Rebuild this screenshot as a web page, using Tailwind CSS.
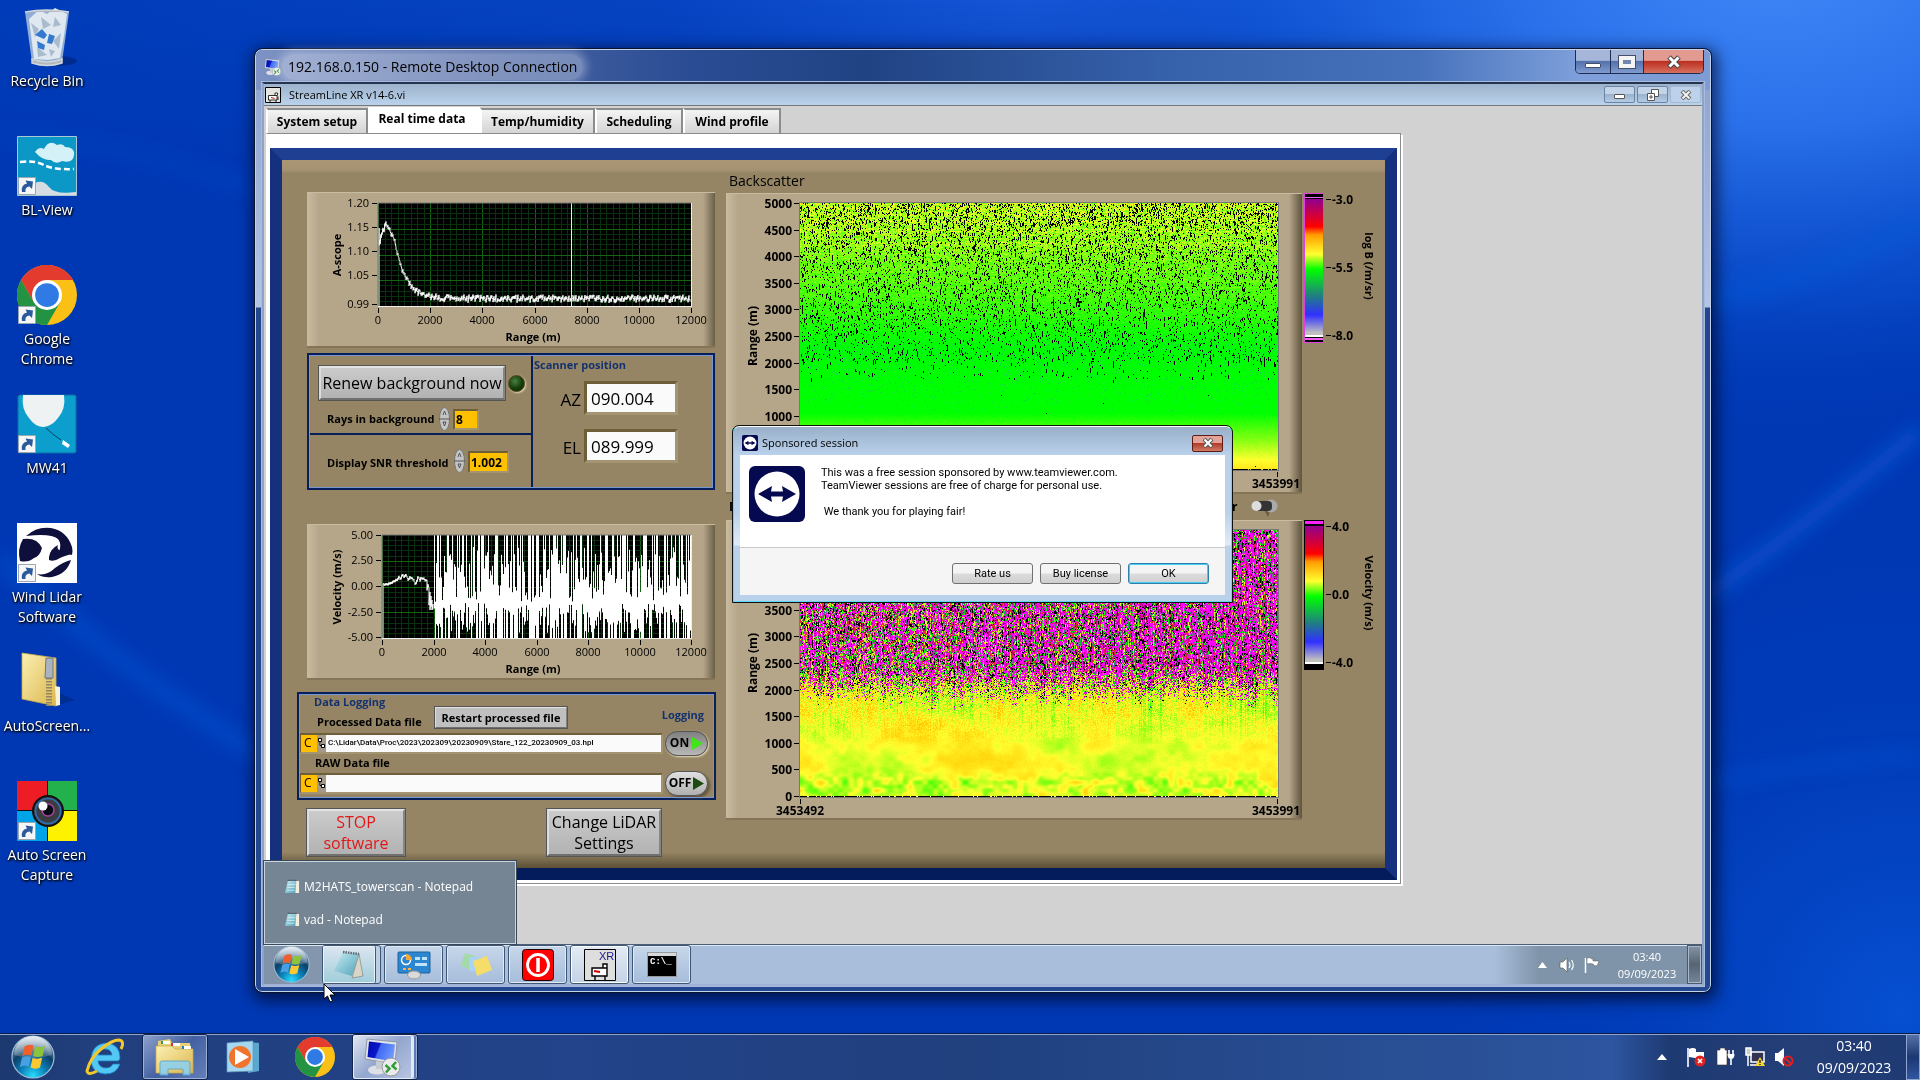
<!DOCTYPE html>
<html lang="en">

<head>
  <meta charset="UTF-8" />
  <meta name="viewport" content="width=device-width, initial-scale=1.0" />
  <title>Lidar desktop</title>
  <script src="https://cdn.jsdelivr.net/npm/@tailwindcss/browser@4"></script>
</head>

<body class="h-screen overflow-hidden flex flex-col relative bg-[#0038b4] font-['Open_Sans','Noto_Sans',sans-serif] text-black">

  <!-- wallpaper -->
  <svg class="absolute inset-0 w-full h-full" viewBox="0 0 1920 1080" preserveAspectRatio="none" aria-hidden="true">
    <defs>
      <radialGradient id="glow" cx="1780" cy="-60" r="760" gradientUnits="userSpaceOnUse" gradientTransform="scale(1 .62)">
        <stop offset="0" stop-color="#4088f8" />
        <stop offset=".35" stop-color="#2a70ea" />
        <stop offset=".7" stop-color="#0c50d0" stop-opacity=".7" />
        <stop offset="1" stop-color="#0038b4" stop-opacity="0" />
      </radialGradient>
      <linearGradient id="topband" x1="0" x2="1">
        <stop offset="0" stop-color="#003cb9" />
        <stop offset=".35" stop-color="#0644c2" />
        <stop offset=".6" stop-color="#1a5cdc" />
        <stop offset="1" stop-color="#2c74ee" />
      </linearGradient>
      <linearGradient id="fade" x1="0" y1="0" x2="0" y2="1">
        <stop offset="0" stop-color="#fff" />
        <stop offset="1" stop-color="#000" />
      </linearGradient>
      <radialGradient id="lowglow" cx="1900" cy="1010" r="480" gradientUnits="userSpaceOnUse">
        <stop offset="0" stop-color="#0650d2" />
        <stop offset="1" stop-color="#0038b4" stop-opacity="0" />
      </radialGradient>
      <mask id="topmask"><rect width="1920" height="160" fill="url(#fade)" /></mask>
      <filter id="soft"><feGaussianBlur stdDeviation="9" /></filter>
    </defs>
    <rect width="1920" height="1080" fill="#0038b4" />
    <rect width="1920" height="160" fill="url(#topband)" mask="url(#topmask)" />
    <rect width="1920" height="1080" fill="url(#glow)" />
    <rect width="1920" height="1080" fill="url(#lowglow)" />
    <g fill="none" stroke="#0a58d8" filter="url(#soft)">
      <path d="M0 135 Q120 140 260 190" stroke-width="7" opacity=".4" />
      <path d="M0 560 Q120 670 260 755" stroke-width="16" opacity=".5" />
      <path d="M1700 600 Q1800 530 1920 430" stroke-width="14" opacity=".7" />
      <path d="M1700 300 Q1820 280 1920 220" stroke-width="26" opacity=".4" />
      <path d="M1700 785 Q1800 762 1920 755" stroke-width="8" opacity=".5" />
    </g>
  </svg>

  <!-- shared artwork -->
  <svg class="absolute w-0 h-0" aria-hidden="true">
    <defs>
      <radialGradient id="orbfill" cx=".5" cy=".95" r=".9">
        <stop offset="0" stop-color="#27dcff" />
        <stop offset=".35" stop-color="#0a7fb6" />
        <stop offset=".65" stop-color="#0d3f68" />
        <stop offset="1" stop-color="#8fa9bf" />
      </radialGradient>
      <linearGradient id="orbtop" x1="0" y1="0" x2="0" y2="1">
        <stop offset="0" stop-color="#fff" stop-opacity=".75" />
        <stop offset="1" stop-color="#fff" stop-opacity=".15" />
      </linearGradient>
      <linearGradient id="screen" x1="0" y1="0" x2="1" y2=".3">
        <stop offset="0" stop-color="#0008b0" />
        <stop offset=".45" stop-color="#0a18c8" />
        <stop offset=".5" stop-color="#4068f0" />
        <stop offset="1" stop-color="#6b95ff" />
      </linearGradient>
      <linearGradient id="folder" x1="0" y1="0" x2="1" y2="1">
        <stop offset="0" stop-color="#fbf0b4" />
        <stop offset="1" stop-color="#dcb64c" />
      </linearGradient>
      <linearGradient id="pad" x1="0" y1="0" x2="1" y2="1">
        <stop offset="0" stop-color="#c9ecf3" />
        <stop offset="1" stop-color="#4fa3b8" />
      </linearGradient>
    </defs>
    <symbol id="orb" viewBox="0 0 44 44">
      <circle cx="22" cy="22" r="21" fill="url(#orbfill)" stroke="#9fc0d8" stroke-width="1.2" />
      <path d="M3 20a19 19 0 0 1 38 0q-19 6-38 0z" fill="url(#orbtop)" />
      <path d="M13.500 11.500q4-3 9-1l-2.200 10q-4.500-2-9 .6z" fill="#f0602c" />
      <path d="M24 11.500q5 2 10-.8l-2.300 10q-4.500 2.400-9.500.2z" fill="#8cc43c" />
      <path d="M11 22.600q4.500-2.600 9-.6l-2.200 9.600q-4.500-2-9 .6z" fill="#4a9fe0" />
      <path d="M21.600 22.800q5 2 9.600-.2l-2.200 9.800q-5 2.400-9.600.2z" fill="#fcc832" />
    </symbol>
    <symbol id="chrome" viewBox="0 0 48 48">
      <circle cx="24" cy="24" r="24" fill="#fbc016" />
      <path d="M24 12h20.800A24 24 0 0 0 3.200 12L13.600 30z" fill="#e33b2e" />
      <path d="M3.200 12A24 24 0 0 0 24 48L34.400 30 24 24 13.600 30z" fill="#229342" />
      <circle cx="24" cy="24" r="12" fill="#fff" />
      <circle cx="24" cy="24" r="9.500" fill="#2f7ae5" />
    </symbol>
    <symbol id="shortcut" viewBox="0 0 18 18">
      <path d="M.5.5h17v17H.5z" fill="#f4f6f8" stroke="#9aa6b0" />
      <path d="M4 15Q2.500 8 9 6.500L7.500 3.500 15 4.500 14 12 11.500 9.500Q6.500 10 7.500 15z" fill="#2a5a9c" />
    </symbol>
    <symbol id="rdp" viewBox="0 0 40 40">
      <path d="M4 2L34 5 32 27 2 22z" fill="#dfe3ea" stroke="#9097a5" />
      <path d="M6 4.500L32 7.500 30 24.500 4.500 20z" fill="url(#screen)" />
      <ellipse cx="14" cy="33" rx="9" ry="4.500" fill="#dde0e4" />
      <path d="M13 24l8 1v7h-8z" fill="#c8ccd2" />
      <circle cx="28" cy="30" r="9" fill="#e8eaec" stroke="#999" />
      <path d="M22.500 28l4 3.500-3.500 4M33.500 32.500l-4-3.500 3.500-4" fill="none" stroke="#2f9b35" stroke-width="2.400" />
    </symbol>
    <symbol id="notepad" viewBox="0 0 16 16">
      <path d="M3 2L12 2 11 15 0 15z" fill="url(#pad)" />
      <path d="M12 2l3 0v13h-4z" fill="#f2efe0" />
      <path d="M3 1.500h10" stroke="#354a55" stroke-width="1.500" stroke-dasharray="1 1" />
      <path d="M3 6h8M2.500 9h8M2 12h8" stroke="#fff" stroke-width=".6" />
    </symbol>
    <symbol id="tv" viewBox="0 0 56 56">
      <rect width="56" height="56" rx="6" fill="#050a50" />
      <circle cx="28" cy="28" r="22.500" fill="#fff" />
      <path d="M9 28L23 20 22 25.500H34L33 20 47 28 33 36 34 30.500H22L23 36z" fill="#050a50" />
    </symbol>
    <symbol id="vi" viewBox="0 0 32 32">
      <path d="M1 1h30v30H1z" fill="#e6e4e0" stroke="#000" stroke-width="2" />
      <path d="M7 17h17v9H7zM20 17v-5h5v5M10 26v4M22 26v4M26 19v7" fill="#fff" stroke="#000" stroke-width="1.600" />
      <path d="M12 21l7 2" stroke="#c00" stroke-width="2" />
    </symbol>
  </svg>

  <!-- desktop -->
  <main class="relative flex-1 min-h-0">
    <nav class="w-[94px] text-white text-[14px] leading-[20px] text-center [text-shadow:1px_1px_2px_#000,0_1px_3px_#000] select-none">
      <a href="#" class="h-[129px] pt-[7px] flex flex-col items-center gap-[4px]">
        <svg class="w-[60px] h-[60px] shrink-0" viewBox="0 0 60 60">
          <ellipse cx="40" cy="54" rx="20" ry="5" fill="#00267c" opacity=".7" />
          <path d="M8 5h44l-7 50q-15 6-30 0z" fill="#a9c2dd" opacity=".85" />
          <path d="M12 12l10-9 8 4 8-6 12 6-3 22-4 22-12 2-14-1z" fill="#dfe8f0" />
          <path d="M14 16l8 6-4 8zM24 10l10 8-8 4zM36 34l8-8-2 16zM20 40l10 8-9 2zM38 10l6 8-8 2zM32 42l6 2-4 6z" fill="#a9bccd" />
          <path d="M18 28l7-6 5 6-3 4zM32 27l6 2-3 8-5-1zM20 34l8 4-1 5-6-2z" fill="#3478d0" />
          <path d="M8 5q22-4 44 0M15 52q15 6 30 0v4q-15 5-30 0z" fill="#b4b8bc" stroke="#cfd5da" stroke-width="1.500" />
        </svg>
        <span>Recycle Bin</span>
      </a>
      <a href="#" class="h-[129px] pt-[7px] flex flex-col items-center gap-[4px]">
        <svg class="w-[60px] h-[60px] shrink-0" viewBox="0 0 60 60">
          <path d="M.5.500h59v59H.5z" fill="#0b98c6" stroke="#a9c8d4" />
          <path d="M18 16q4-6 9-3 5-10 13-4 6-2 8 2 10 0 9 8-1 9-12 6-6 4-11-1-8 1-16-8z" fill="#d4f1f7" />
          <path d="M3 26q14-2 24 3t30 4" fill="none" stroke="#fff" stroke-width="2.500" stroke-dasharray="6 3" />
          <path d="M18 47q8-4 14 4t27 5v3H18z" fill="#d5dde2" />
          <use href="#shortcut" x="1" y="41" width="18" height="18" />
        </svg>
        <span>BL-View</span>
      </a>
      <a href="#" class="h-[129px] pt-[7px] flex flex-col items-center gap-[4px]">
        <svg class="w-[60px] h-[60px] shrink-0" viewBox="0 0 60 60">
          <use href="#chrome" width="60" height="60" />
          <use href="#shortcut" x="1" y="41" width="18" height="18" />
        </svg>
        <span>Google<br />Chrome</span>
      </a>
      <a href="#" class="h-[129px] pt-[7px] flex flex-col items-center gap-[4px]">
        <svg class="w-[60px] h-[60px] shrink-0" viewBox="0 0 60 60">
          <rect x="1" y="1" width="58" height="58" rx="2" fill="#0c9fce" stroke="#0a6fa0" />
          <path d="M6 1h41q2 14-6 23-6 8-14 9-9 0-15-9Q4 15 6 1z" fill="#eef2f3" />
          <path d="M29 34q6 6 15 12" fill="none" stroke="#045" />
          <path d="M46 46l7 5-2 3-6-4z" fill="#fff" />
          <use href="#shortcut" x="1" y="41" width="18" height="18" />
        </svg>
        <span>MW41</span>
      </a>
      <a href="#" class="h-[129px] pt-[7px] flex flex-col items-center gap-[4px]">
        <svg class="w-[60px] h-[60px] shrink-0" viewBox="0 0 60 60">
          <path d="M0 0h60v60H0z" fill="#fff" />
          <path d="M9 13Q20 3 34 5 50 8 55 24q1 4 0 8-7-3-13-3 3-8-1-13Q34 10 9 13z" fill="#0f0f3c" />
          <path d="M6 16q14-2 19 9-2 8-8 10-6 5-14 3-3-12 3-22z" fill="#0f0f3c" />
          <path d="M32 34q1-8 9-12-2 4 3 6 5 1 11 3-8 2-12 4-6 4-11 2zM20 51q10 2 18-6 8-6 16-8-4 14-19 17-9 1-15-3z" fill="#0f0f3c" />
          <use href="#shortcut" x="1" y="41" width="18" height="18" />
        </svg>
        <span>Wind Lidar<br />Software</span>
      </a>
      <a href="#" class="h-[129px] pt-[7px] flex flex-col items-center gap-[4px]">
        <svg class="w-[60px] h-[60px] shrink-0" viewBox="0 0 60 60">
          <path d="M38 54l20-6-18-8z" fill="#00267c" opacity=".6" />
          <path d="M5 1l34 5v48L5 47z" fill="url(#folder)" stroke="#c9a94a" stroke-width=".8" />
          <path d="M38 34l5 1v18l-4 1z" fill="#f6f3dc" />
          <path d="M32 26v28" stroke="#8f8668" stroke-width="6" stroke-dasharray="1.500 1.500" />
          <path d="M29 6h7v20h-8z" fill="#a9b4c0" stroke="#6c7680" />
        </svg>
        <span>AutoScreen...</span>
      </a>
      <a href="#" class="h-[129px] pt-[7px] flex flex-col items-center gap-[4px]">
        <svg class="w-[60px] h-[60px] shrink-0" viewBox="0 0 60 60">
          <path d="M0 0h30v30H0z" fill="#ee1c24" />
          <path d="M30 0h30v30H30z" fill="#22b14c" />
          <path d="M0 30h30v30H0z" fill="#00a2e8" />
          <path d="M30 30h30v30H30z" fill="#fff200" />
          <path d="M30.500 0v60M0 29.500h60" stroke="#111" />
          <circle cx="31" cy="30" r="15" fill="#3c3c40" stroke="#111" stroke-width="2" />
          <circle cx="31" cy="30" r="12.500" fill="none" stroke="#2b70b8" stroke-width="1.600" />
          <circle cx="31" cy="29" r="6" fill="#0a0a14" stroke="#a0459c" stroke-width="1.500" />
          <circle cx="26" cy="25" r="4.500" fill="#fff" />
          <use href="#shortcut" x="1" y="41" width="18" height="18" />
        </svg>
        <span>Auto Screen<br />Capture</span>
      </a>
    </nav>

    <!-- remote desktop window -->
    <section class="absolute top-[49px] left-[255px] right-[209px] bottom-[41px] rounded-[7px] border border-[#c3d3ee] outline outline-[#0a1430] px-[6px] pb-[5px] flex flex-col shadow-[2px_4px_16px_4px_rgba(0,0,20,0.65)] bg-[linear-gradient(180deg,#8ca0cc_0px,#b4c4e4_257px,#23468e_258px,#24488f_100%)]">
      <div class="absolute inset-x-0 top-0 h-[40px] rounded-t-[6px] bg-[linear-gradient(90deg,#7e93c4_0%,#5069a6_14%,#2a4c94_30%,#204384_42%,#3560aa_62%,#4672bc_80%,#7e9fda_91%,#7d9bd4_100%)]"></div>
      <header class="relative h-[32px] flex items-start">
        <svg class="w-[18px] h-[20px] mt-[7px] ml-[2px]"><use href="#rdp" width="18" height="20" /></svg>
        <h1 class="mt-[4px] px-[6px] rounded-full text-[14px] leading-[26px] whitespace-nowrap bg-white/30 shadow-[0_0_8px_4px_rgba(255,255,255,0.3)]">192.168.0.150 - Remote Desktop Connection</h1>
        <div class="ml-auto h-[24px] flex border border-t-0 border-[#1d2c50] rounded-b-[5px] overflow-hidden">
          <button aria-label="Minimize" class="w-[35px] grid place-items-center pt-[8px] border-r border-[#1d2c50] bg-[linear-gradient(180deg,#a5b6d8_45%,#5571ae_50%,#7f9bd0)]"><span class="w-[16px] h-[5px] bg-white border border-[#454f6a] rounded-[1px]"></span></button>
          <button aria-label="Maximize" class="w-[33px] grid place-items-center border-r border-[#1d2c50] bg-[linear-gradient(180deg,#a5b6d8_45%,#5571ae_50%,#7f9bd0)]"><span class="w-[16px] h-[12px] border-4 border-[#f4f4f4] outline outline-[#454f6a] bg-[#7085b0]"></span></button>
          <button aria-label="Close" class="w-[59px] grid place-items-center bg-[linear-gradient(180deg,#e39a90_45%,#bb3020_50%,#d8705f)]">
            <svg width="16" height="14" viewBox="0 0 16 14"><path d="M3 2l10 10M13 2L3 12" stroke="#454545" stroke-width="5" /><path d="M3.500 2.500l9 9M12.500 2.500l-9 9" stroke="#fff" stroke-width="3" /></svg>
          </button>
        </div>
      </header>

      <div class="relative flex-1 min-h-0 flex flex-col border-2 border-[#24344e] border-b-[#9fb2d6] border-x-[#8fa2c8] outline outline-[#a9bbdc] bg-[#d2d2d2]">
        <!-- LabVIEW window title -->
        <div class="h-[22px] shrink-0 pl-[1px] pr-[1px] flex items-center bg-[linear-gradient(180deg,#9db2cb,#bad2ec)] border-b border-[#777]">
          <svg class="w-[16px] h-[16px]"><use href="#vi" width="16" height="16" /></svg>
          <h2 class="ml-[8px] text-[11px] leading-[20px]">StreamLine XR v14-6.vi</h2>
          <div class="ml-auto flex gap-[2px] h-[17px]">
            <button aria-label="Minimize" class="w-[31px] grid place-items-center border border-[#6b84a3] rounded-[2px] bg-[linear-gradient(180deg,#c3d4e8_45%,#9bb3cf_50%,#b5cbe4)]"><span class="mt-[3px] w-[11px] h-[5px] bg-white border border-[#555] rounded-[1px]"></span></button>
            <button aria-label="Restore" class="w-[31px] grid place-items-center border border-[#6b84a3] rounded-[2px] bg-[linear-gradient(180deg,#c3d4e8_45%,#9bb3cf_50%,#b5cbe4)]">
              <svg width="12" height="12" viewBox="0 0 12 12" fill="#fff" stroke="#555"><path d="M4.500.5h7v7h-7z" /><path d="M.5 4.500h7v7h-7zM3 7h2v2H3z" /></svg>
            </button>
            <button aria-label="Close" class="w-[31px] grid place-items-center border border-[#a3bad4] rounded-[2px] bg-[#bdd2ea]">
              <svg width="12" height="10" viewBox="0 0 12 10"><path d="M2 1l8 8M10 1L2 9" stroke="#666" stroke-width="4" /><path d="M2.500 1.500l7 7M9.500 1.500l-7 7" stroke="#f4f4f4" stroke-width="2" /></svg>
            </button>
          </div>
        </div>

        <!-- front panel -->
        <div class="flex-1 min-h-0 overflow-hidden pt-[1px] pl-[2px]">
          <div role="tablist" class="flex items-end h-[26px] text-[12px] font-bold leading-[20px]">
            <button role="tab" class="w-[102px] h-[25px] border-2 border-b-0 border-[#8c8c8c] border-l-white bg-[linear-gradient(180deg,#f4f4f4,#d4d4d4)]">System setup</button>
            <button role="tab" aria-selected="true" class="w-[112px] h-[26px] pb-[2px] pr-[4px] bg-white">Real time data</button>
            <button role="tab" class="w-[115px] h-[25px] border-2 border-b-0 border-[#8c8c8c] border-l-white bg-[linear-gradient(180deg,#f4f4f4,#d4d4d4)]">Temp/humidity</button>
            <button role="tab" class="w-[88px] h-[25px] border-2 border-b-0 border-[#8c8c8c] border-l-white bg-[linear-gradient(180deg,#f4f4f4,#d4d4d4)]">Scheduling</button>
            <button role="tab" class="w-[98px] h-[25px] border-2 border-b-0 border-[#8c8c8c] border-l-white bg-[linear-gradient(180deg,#f4f4f4,#d4d4d4)]">Wind profile</button>
          </div>
          <div class="w-[1135px] pt-[14px] px-[3px] pb-[3px] bg-white border border-[#8c8c8c] border-l-white shadow-[2px_2px_0_#fff]">
            <div class="border-[12px] border-t-[#1f3f92] border-x-[#15307f] border-b-[#051c5c] bg-[#958564] h-[732px]">
              <div class="flex h-full pl-[15px] bg-[linear-gradient(180deg,#ab9674_0px,#a59272_10px,#958564_13px,#958564_692px,#5f5238_707px)]">

                <div class="w-[419px] pt-[32px]">
                  <figure class="ml-[10px] w-[408px] h-[156px] bg-[linear-gradient(90deg,#c9bb9f_0px,#b5a68a_12px,#b5a68a_396px,#6a5f48_408px)] border-t border-[#c9bb9f] border-b-2 border-b-[#857556]">
                    <svg id="ascope" class="w-full h-full overflow-visible" role="img" aria-label="A-scope graph"></svg>
                  </figure>

                  <div class="ml-[10px] mt-[5px] w-[408px] h-[137px] flex border-2 border-[#07205c] outline outline-[#7b95cf] -outline-offset-3">
                    <div class="w-[224px] border-r-2 border-[#07205c] flex flex-col">
                      <div class="h-[80px] border-b-2 border-[#07205c] pt-[10px] pl-[9px]">
                        <div class="flex items-center">
                          <button class="w-[188px] h-[36px] text-[16px] leading-[20px] whitespace-nowrap border-3 border-t-[#e4e4e4] border-l-[#dcdcdc] border-r-[#858585] border-b-[#707070] outline outline-[#555] -outline-offset-1 bg-[linear-gradient(180deg,#cbcbcb,#b2b2b2)]">Renew background now</button>
                          <span class="ml-[2px] w-[17px] h-[17px] rounded-full border border-[#52461e] bg-[radial-gradient(circle_at_40%_35%,#4a8040,#123c08_55%,#0a2804)] shadow-[1px_1px_2px_#e8dcc0]"></span>
                        </div>
                        <div class="mt-[6px] flex items-center gap-[3px] text-[12px] leading-[16px] font-bold">
                          <label for="rays" class="w-[109px] ml-[9px] text-[11px] whitespace-nowrap">Rays in background</label>
                          <svg width="11" height="24" viewBox="0 0 11 24"><ellipse cx="5.500" cy="12" rx="5" ry="11.500" fill="#c4c4c4" stroke="#777" /><path d="M0 12h11M4 8l1.500-4L7 8M4 15l1.500 4L7 15z" fill="none" stroke="#555" /></svg>
                          <input id="rays" value="8" class="w-[26px] h-[21px] pl-[1px] bg-[#ffc000] border-2 border-[#6f5f38] border-b-[#a39472] border-r-[#a39472]" />
                        </div>
                      </div>
                      <div class="flex-1 flex items-start pt-[14px] gap-[3px] text-[12px] leading-[16px] font-bold">
                        <label for="snr" class="w-[124px] ml-[18px] mt-[6px] text-[11px] whitespace-nowrap">Display SNR threshold</label>
                        <svg width="11" height="24" viewBox="0 0 11 24"><ellipse cx="5.500" cy="12" rx="5" ry="11.500" fill="#c4c4c4" stroke="#777" /><path d="M0 12h11M4 8l1.500-4L7 8M4 15l1.500 4L7 15z" fill="none" stroke="#555" /></svg>
                        <input id="snr" value="1.002" class="w-[41px] h-[22px] mt-[2px] pl-[1px] bg-[#ffc000] border-2 border-[#6f5f38] border-b-[#a39472] border-r-[#a39472]" />
                      </div>
                    </div>
                    <div class="flex-1 text-[17px] leading-[24px]">
                      <h3 class="pl-[1px] text-[11px] leading-[20px] font-bold text-[#14326f]">Scanner position</h3>
                      <div class="flex items-center mt-[6px]">
                        <label for="az" class="w-[48px] text-right mr-[3px] pt-[3px]">AZ</label>
                        <input id="az" value="090.004" class="w-[94px] h-[34px] pl-[4px] bg-[#fafafa] border-3 border-[#6f5f38] border-b-[#a39472] border-r-[#a39472]" />
                      </div>
                      <div class="flex items-center mt-[14px]">
                        <label for="el" class="w-[48px] text-right mr-[3px] pt-[3px]">EL</label>
                        <input id="el" value="089.999" class="w-[94px] h-[34px] pl-[4px] bg-[#fafafa] border-3 border-[#6f5f38] border-b-[#a39472] border-r-[#a39472]" />
                      </div>
                    </div>
                  </div>

                  <figure class="ml-[10px] mt-[34px] w-[408px] h-[156px] bg-[linear-gradient(90deg,#c9bb9f_0px,#b5a68a_12px,#b5a68a_396px,#6a5f48_408px)] border-t border-[#c9bb9f] border-b-2 border-b-[#857556]">
                    <svg id="velocity" class="w-full h-full overflow-visible" role="img" aria-label="Velocity graph"></svg>
                  </figure>

                  <div class="mt-[12px] h-[108px] border-2 border-[#07205c] outline outline-[#7b95cf] -outline-offset-3 text-[11px] font-bold leading-[16px]">
                    <div class="flex h-[37px]">
                      <div class="w-[135px] pl-[15px]">
                        <h3 class="text-[#14326f]">Data Logging</h3>
                        <label for="proc" class="block pl-[3px] mt-[4px] whitespace-nowrap">Processed Data file</label>
                      </div>
                      <button class="mt-[12px] w-[134px] h-[23px] whitespace-nowrap border-2 border-t-[#e4e4e4] border-l-[#dcdcdc] border-r-[#858585] border-b-[#707070] outline outline-[#555] -outline-offset-1 bg-[#c0c0c0]">Restart processed file</button>
                      <h3 class="ml-auto mr-[10px] mt-[13px] text-[#14326f]">Logging</h3>
                    </div>
                    <div class="flex items-center h-[24px] text-[12px]">
                      <div class="flex w-[364px] h-[21px] border-2 border-[#6f5f38] border-b-[#a39472] border-r-[#a39472]">
                        <span class="w-[16px] pl-[3px] bg-[#ffc000] font-normal">C</span>
                        <svg width="9" height="17" viewBox="0 0 9 17" class="bg-[#a39a8a]"><path d="M1.500 3.500h3v3h-3zM4.500 9.500h3v3h-3zM3 6.500v4h1.500" fill="#fff" stroke="#000" /></svg>
                        <input id="proc" value="C:\Lidar\Data\Proc\2023\202309\20230909\Stare_122_20230909_03.hpl" class="flex-1 min-w-0 pl-[2px] bg-[#fafafa] text-[8px] leading-[16px] font-medium font-['Roboto']" />
                      </div>
                      <button class="ml-[2px] w-[43px] h-[25px] flex items-center justify-center gap-[2px] rounded-full border border-[#555] bg-[linear-gradient(180deg,#808080,#b8b8b8)] shadow-[1px_1px_2px_#e8dcc0]">ON<svg width="12" height="13"><path d="M1 0l11 6.500-11 6.500z" fill="#3fe516" /></svg></button>
                    </div>
                    <label for="raw" class="block pl-[16px] h-[16px]">RAW Data file</label>
                    <div class="flex items-center h-[24px] text-[12px]">
                      <div class="flex w-[364px] h-[21px] border-2 border-[#6f5f38] border-b-[#a39472] border-r-[#a39472]">
                        <span class="w-[16px] pl-[3px] bg-[#ffc000] font-normal">C</span>
                        <svg width="9" height="17" viewBox="0 0 9 17" class="bg-[#a39a8a]"><path d="M1.500 3.500h3v3h-3zM4.500 9.500h3v3h-3zM3 6.500v4h1.500" fill="#fff" stroke="#000" /></svg>
                        <input id="raw" value="" class="flex-1 min-w-0 bg-[#fafafa]" />
                      </div>
                      <button class="ml-[2px] w-[43px] h-[25px] flex items-center justify-center gap-[2px] rounded-full border border-[#555] bg-[linear-gradient(180deg,#e0e0e0,#b0b0b0)] shadow-[2px_2px_3px_#5f5238]">OFF<svg width="11" height="13"><path d="M0 0l11 6.500-11 6.500z" fill="#1c4a10" /></svg></button>
                    </div>
                  </div>

                  <div class="mt-[8px] flex items-start text-[16px] leading-[21px]">
                    <button class="ml-[9px] w-[100px] h-[49px] pt-[1px] text-[#e01818] border-3 border-t-[#e4e4e4] border-l-[#dcdcdc] border-r-[#858585] border-b-[#707070] outline outline-[#555] -outline-offset-1 bg-[linear-gradient(180deg,#cbcbcb,#b2b2b2)]">STOP<br />software</button>
                    <button class="ml-[140px] w-[116px] h-[49px] pt-[1px] whitespace-nowrap border-3 border-t-[#e4e4e4] border-l-[#dcdcdc] border-r-[#858585] border-b-[#707070] outline outline-[#555] -outline-offset-1 bg-[linear-gradient(180deg,#cbcbcb,#b2b2b2)]">Change LiDAR<br />Settings</button>
                  </div>
                </div>

                <div class="ml-[10px] w-[650px]">
                  <h3 class="pt-[10px] pl-[3px] h-[33px] text-[14px] leading-[22px]">Backscatter</h3>
                  <div class="flex items-start">
                    <figure class="relative w-[576px] h-[301px] pl-[74px] pt-[9px] bg-[linear-gradient(90deg,#c9bb9f_0px,#b5a68a_12px,#b5a68a_563px,#5f543e_576px)] border-t border-[#c9bb9f] border-b-2 border-b-[#857556]">
                      <canvas id="backscatter" width="478" height="267" class="outline outline-[#777]"></canvas>
                      <svg class="axis absolute inset-0 w-full h-full overflow-visible"></svg>
                    </figure>
                    <svg class="bar ml-[2px] w-[72px] h-[152px] overflow-visible" data-ticks="-3.0,-5.5,-8.0" data-title="log B (/m/sr)" data-edge="#e040e0"></svg>
                  </div>
                  <div class="h-[26px] flex items-center text-[12px] font-bold">
                    <span class="w-[8px] ml-[3px] overflow-hidden">D</span>
                    <span class="ml-[495px]">r</span>
                    <svg class="ml-[14px]" width="27" height="22" viewBox="0 0 27 22"><path d="M12 12h8l-3 9z" fill="#6c5e42" /><circle cx="20" cy="10" r="6.500" fill="#aaa" /><rect x="4" y="5" width="17" height="10" rx="4" fill="#333" /><circle cx="5.500" cy="10" r="5" fill="#ddd" /></svg>
                  </div>
                  <div class="flex items-start">
                    <figure class="relative w-[576px] h-[300px] pl-[74px] pt-[9px] bg-[linear-gradient(90deg,#c9bb9f_0px,#b5a68a_12px,#b5a68a_563px,#5f543e_576px)] border-t border-[#c9bb9f] border-b-2 border-b-[#857556]">
                      <canvas id="doppler" width="478" height="267" class="outline outline-[#777]"></canvas>
                      <svg class="axis absolute inset-0 w-full h-full overflow-visible"></svg>
                    </figure>
                    <svg class="bar ml-[2px] w-[72px] h-[152px] overflow-visible" data-ticks="4.0,0.0,-4.0" data-title="Velocity (m/s)" data-edge="#000"></svg>
                  </div>
                </div>

              </div>
            </div>
          </div>
        </div>

        <!-- remote taskbar -->
        <footer class="h-[40px] shrink-0 border-t border-[#4d5f78] flex items-center gap-[3px] shadow-[inset_0_1px_0_#dbe6f2] bg-[linear-gradient(90deg,#7f92a8_0px,#8597ae_58px,#a9bedb_110px,#a9bedb_1230px,#8094a9_1275px,#8094a9_100%)]">
          <button aria-label="Start" class="w-[55px] grid place-items-center"><svg width="37" height="37"><use href="#orb" width="37" height="37" /></svg></button>
          <div class="flex w-[59px] h-[39px] rounded-[3px] border border-[#3f5674] bg-[#b8cfe6]">
            <button aria-label="Notepad" class="w-[53px] grid place-items-center rounded-[2px] border-r border-[#3f5674] shadow-[inset_0_0_0_1px_#eaf3fa] bg-[linear-gradient(180deg,#dbe6f1,#a0cdd9)]">
              <svg width="32" height="30" viewBox="0 0 32 30"><path d="M10 2l16 2-7 22-18-5z" fill="url(#pad)" /><path d="M26 4l4 22-11 2z" fill="#d9d6c8" stroke="#777" stroke-width=".6" /><path d="M10 2l16 2" stroke="#667" stroke-width="2.500" stroke-dasharray="1.500 1" /></svg>
            </button>
          </div>
          <button aria-label="Control Panel" class="w-[59px] h-[39px] grid place-items-center rounded-[3px] border border-[#3f5674] shadow-[inset_0_0_0_1px_#dfeaf5] bg-[linear-gradient(180deg,#c7d7ea,#a5bcda)]">
            <svg width="34" height="30" viewBox="0 0 34 30"><rect x="1" y="2" width="32" height="21" rx="1" fill="#2c86d0" stroke="#1d609c" /><circle cx="9" cy="10" r="4.500" fill="none" stroke="#fff" stroke-width="1.500" /><path d="M9 10V4a6 6 0 0 1 6 6z" fill="#f5a83c" /><path d="M18 7h5v3h-5zM25 7h5v3h-5zM18 13h12v3H18z" fill="#bfe3fa" /><path d="M6 19h3M11 19h3" stroke="#ffb24c" stroke-width="2" /><ellipse cx="17" cy="25" rx="6.500" ry="4" fill="#dadada" stroke="#999" /></svg>
          </button>
          <button aria-label="Sticky Notes" class="w-[59px] h-[39px] grid place-items-center rounded-[3px] border border-[#3f5674] shadow-[inset_0_0_0_1px_#dfeaf5] bg-[linear-gradient(180deg,#c7d7ea,#a5bcda)]">
            <svg width="32" height="28" viewBox="0 0 32 28"><path d="M5 2l12 4-4 14-12-5z" fill="#a4d9a8" /><path d="M9 6h14v14H9z" fill="#a9d3f4" /><path d="M13 10l14-5 5 14-15 6z" fill="#f6dc68" /></svg>
          </button>
          <button aria-label="Power" class="w-[59px] h-[39px] grid place-items-center rounded-[3px] border border-[#3f5674] shadow-[inset_0_0_0_1px_#dfeaf5] bg-[linear-gradient(180deg,#c7d7ea,#a5bcda)]">
            <svg width="32" height="32" viewBox="0 0 32 32"><rect x=".5" y=".5" width="31" height="31" rx="3" fill="#f00" stroke="#200" /><circle cx="16" cy="16" r="10.500" fill="none" stroke="#fff" stroke-width="2.800" /><path d="M16 9v14" stroke="#fff" stroke-width="3.500" /></svg>
          </button>
          <button aria-label="StreamLine XR" class="w-[59px] h-[39px] grid place-items-center rounded-[3px] border border-[#3f5674] shadow-[inset_0_0_0_1px_#fff] bg-[linear-gradient(180deg,#e3ebf4,#c3d2e5)]">
            <svg width="32" height="32" viewBox="0 0 32 32"><path d="M.5.5h31v31H.5z" fill="#dedede" stroke="#000" /><path d="M8 19h15v8H8zM19 19v-4h4v4M11 27v4M21 27v4" fill="#fff" stroke="#000" stroke-width="1.400" /><path d="M10 22l6 1" stroke="#c00" stroke-width="2" /><text x="15" y="11" font-size="11" fill="#1a1a8c" font-family="Liberation Sans">XR</text></svg>
          </button>
          <button aria-label="Command Prompt" class="w-[59px] h-[39px] grid place-items-center rounded-[3px] border border-[#3f5674] shadow-[inset_0_0_0_1px_#dfeaf5] bg-[linear-gradient(180deg,#c7d7ea,#a5bcda)]">
            <svg width="30" height="25" viewBox="0 0 30 25"><path d="M.5.5h29v24H.5z" fill="#000" stroke="#999" /><path d="M1 1h28v3H1z" fill="#d5d9dd" /><text x="3" y="12" font-size="9" font-weight="bold" fill="#fff" font-family="Liberation Mono">C:\_</text></svg>
          </button>
          <div class="ml-auto h-full flex items-center text-white">
            <svg width="9" height="6" class="mr-[12px]"><path d="M4.500 0L9 6H0z" fill="#fff" /></svg>
            <svg width="16" height="16" viewBox="0 0 16 16" class="mr-[9px]"><path d="M1 5h3l4-4v14l-4-4H1z" fill="#fff" stroke="#555" stroke-width=".6" /><path d="M10 5q2 3 0 6M12.500 3q3.500 5 0 10" fill="none" stroke="#fff" stroke-width="1.200" /></svg>
            <svg width="16" height="16" viewBox="0 0 16 16" class="mr-[16px]"><path d="M1.500 1v15" stroke="#fff" stroke-width="1.500" /><path d="M3 1q3-1 5 1h1v2h6l-2 5q-3 0-4-2-3-1-6 0z" fill="#fff" stroke="#555" stroke-width=".5" /></svg>
            <time class="w-[62px] text-center text-[11px] leading-[17px]">03:40<br />09/09/2023</time>
            <button aria-label="Show desktop" class="ml-[9px] w-[15px] h-full border border-[#4a5a6c] shadow-[inset_0_0_0_1px_#a9b8c8] bg-[linear-gradient(180deg,#8494a5,#566473_50%,#76869a)]"></button>
          </div>
        </footer>

        <!-- Notepad jump list -->
        <ul class="absolute left-0 bottom-[40px] w-[252px] h-[83px] bg-[#768593] border border-[#c8d4e0] outline outline-[#39495a] pl-[20px] text-white text-[12px] leading-[33px] pt-[8px]">
          <li><a href="#" class="flex items-center gap-[4px]"><svg width="15" height="15"><use href="#notepad" width="15" height="15" /></svg>M2HATS_towerscan - Notepad</a></li>
          <li><a href="#" class="flex items-center gap-[4px]"><svg width="15" height="15"><use href="#notepad" width="15" height="15" /></svg>vad - Notepad</a></li>
        </ul>
      </div>
    </section>

    <!-- TeamViewer dialog -->
    <section role="dialog" aria-labelledby="tv-title" class="absolute left-[733px] top-[426px] w-[499px] h-[176px] rounded-t-[6px] border border-t-white border-[#5fd8f4] outline outline-[#111] px-[6px] pb-[6px] flex flex-col text-[11px] leading-[13px] font-['Roboto','Open_Sans',sans-serif] bg-[linear-gradient(180deg,#9ab0ca_0px,#b9d1ea_28px,#b9d1ea_85px,#e0ecf8_118px,#b9d1ea_119px)]">
      <header class="h-[28px] flex items-center pt-[4px] px-[2px]">
        <svg width="16" height="16"><use href="#tv" width="16" height="16" /></svg>
        <h2 id="tv-title" class="ml-[4px] leading-[16px] font-['Open_Sans']">Sponsored session</h2>
        <button aria-label="Close" class="ml-auto w-[31px] h-[17px] grid place-items-center rounded-[2px] border border-[#5c1c14] bg-[linear-gradient(180deg,#e2a398_45%,#b23c28_50%,#d07a68)]">
          <svg width="12" height="10" viewBox="0 0 12 10"><path d="M2 1l8 8M10 1L2 9" stroke="#555" stroke-width="4" /><path d="M2.500 1.500l7 7M9.500 1.500l-7 7" stroke="#fff" stroke-width="2.200" /></svg>
        </button>
      </header>
      <div class="flex-1 bg-white flex pl-[9px] pt-[11px]">
        <svg width="56" height="56"><use href="#tv" width="56" height="56" /></svg>
        <p class="ml-[16px]">This was a free session sponsored by www.teamviewer.com.<br />TeamViewer sessions are free of charge for personal use.<br /><br />&nbsp;We thank you for playing fair!</p>
      </div>
      <footer class="h-[48px] bg-[#f5f5f5] border-t border-[#c8c8c8] flex gap-[7px] justify-end pt-[15px] pr-[16px]">
        <button class="w-[81px] h-[21px] rounded-[3px] border border-[#707070] bg-[linear-gradient(180deg,#f4f4f4_48%,#dcdcdc_52%,#cfcfcf)]">Rate us</button>
        <button class="w-[81px] h-[21px] rounded-[3px] border border-[#707070] bg-[linear-gradient(180deg,#f4f4f4_48%,#dcdcdc_52%,#cfcfcf)]">Buy license</button>
        <button class="w-[81px] h-[21px] rounded-[3px] border border-[#2f7fae] shadow-[inset_0_0_0_1px_#48cdf2] bg-[linear-gradient(180deg,#f4f4f4_48%,#dcdcdc_52%,#cfcfcf)]">OK</button>
      </footer>
    </section>

    <!-- mouse pointer -->
    <svg class="absolute left-[323px] top-[983px]" width="13" height="20" viewBox="0 0 13 20"><path d="M1 1v15l3.500-3 2.500 6 2.500-1-2.500-6h5z" fill="#fff" stroke="#000" /></svg>
  </main>

  <!-- taskbar -->
  <footer class="relative h-[47px] shrink-0 border-t border-[#0a1c48] shadow-[inset_0_1px_0_#8ea5d0] flex items-center bg-[linear-gradient(90deg,#1c386f_0px,#213f7d_90px,#23438a_30%,#20407e_50%,#2b539b_80%,#2d55a0_84%,#1e3a72_87%,#253f78_94%,#1e3a72_100%)]">
    <button aria-label="Start" class="ml-[11px]"><svg width="44" height="44"><use href="#orb" width="44" height="44" /></svg></button>
    <button aria-label="Internet Explorer" class="ml-[29px]">
      <svg width="40" height="40" viewBox="0 0 40 40"><path d="M34 24H14q1 7 8 7 5 0 7-4h7q-3 10-15 10Q7 36 7 22 8 7 22 6q14 1 14 15 0 2-2 3zM14 18h14q-1-6-7-6t-7 6z" fill="#53c8f4" fill-rule="evenodd" stroke="#1a7cc0" stroke-width=".8" /><path d="M37 12q4-8-2-9-7 0-18 9T3 34q1 5 10 0" fill="none" stroke="#f3c62c" stroke-width="3" /></svg>
    </button>
    <button aria-label="Explorer" class="ml-[18px] w-[66px] h-[46px] grid place-items-center rounded-[3px] border border-[#10234c] shadow-[inset_0_0_0_1px_#9db0d6] bg-[linear-gradient(135deg,#8ea2cc,#4360a2_50%,#6580ba)]">
      <svg width="42" height="40" viewBox="0 0 42 40"><path d="M4 4l12-2 2 4h18l2 28H3z" fill="#e9cf74" /><path d="M2 9h16l3 3h18v24H2z" fill="url(#folder)" stroke="#c9a94a" stroke-width=".8" /><path d="M8 4h8v3H8zM18 6h8v3h-8zM29 9h8v3h-8z" fill="#fff" /><path d="M7 4h2v3H7z" fill="#2a9b50" /><path d="M17 6h2v3h-2z" fill="#d33" /><path d="M28 9h2v3h-2z" fill="#27c" /><path d="M6 38V26q0-2 2-2h26q2 0 2 2v12h-7v-6H14v6z" fill="#8fd0ee" opacity=".9" stroke="#5aa6cc" /></svg>
    </button>
    <button aria-label="Media Player" class="ml-[18px]">
      <svg width="34" height="34" viewBox="0 0 34 34"><path d="M22 2l11 1v28l-11 2z" fill="#5aa7cf" /><path d="M1 3l26-2v30L1 32z" fill="#a5d8ee" stroke="#5e9cc0" stroke-width=".7" /><circle cx="14" cy="17" r="11" fill="#f0742c" /><path d="M9 9l14 8-14 8z" fill="#fff" /></svg>
    </button>
    <button aria-label="Chrome" class="ml-[35px]"><svg width="40" height="40"><use href="#chrome" width="40" height="40" /></svg></button>
    <div class="ml-[17px] w-[66px] h-[46px] flex rounded-[3px] border border-[#10234c] shadow-[inset_0_0_0_1px_#9db0d6] bg-[#5f7ab4]">
      <button aria-label="Remote Desktop" class="w-[61px] grid place-items-center rounded-[3px] border-r-2 border-[#dfe6f4] shadow-[inset_0_0_0_1px_#e5ebf6] bg-[linear-gradient(135deg,#e1e6f1,#92a6cf_50%,#b9c6e2)]"><svg width="40" height="40"><use href="#rdp" width="40" height="40" /></svg></button>
    </div>

    <div class="ml-auto h-full flex items-center text-white">
      <svg width="10" height="6" class="mr-[19px]"><path d="M5 0l5 6H0z" fill="#fff" /></svg>
      <svg width="20" height="20" viewBox="0 0 20 20" class="mr-[9px]"><path d="M2 1v19" stroke="#fff" stroke-width="1.600" /><path d="M3 2q4-2 7 0v3h8v6H9L3 10z" fill="#fff" /><circle cx="14" cy="14" r="5.500" fill="#d22" /><path d="M12 12l4 4M16 12l-4 4" stroke="#fff" stroke-width="1.600" /></svg>
      <svg width="20" height="20" viewBox="0 0 20 20" class="mr-[10px]"><path d="M2 3h3V1h5v2h2v15H2z" fill="#fff" stroke="#333" stroke-width=".6" /><path d="M14 3v4M18 3v4M16 12v6" stroke="#fff" stroke-width="1.600" /><path d="M12.500 7h7q0 5-3.500 5t-3.500-5z" fill="#fff" /></svg>
      <svg width="20" height="20" viewBox="0 0 20 20" class="mr-[9px]"><path d="M6 5h13v10H6z" fill="#335" stroke="#fff" stroke-width="1.500" /><path d="M1 1h5v7H1zM3 8v11M5 18h8" fill="#ccc" stroke="#fff" stroke-width="1.500" /><path d="M15 10l5 9H10z" fill="#f7d62c" /><path d="M15 13v3M15 17v1" stroke="#222" stroke-width="1.400" /></svg>
      <svg width="20" height="20" viewBox="0 0 20 20" class="mr-[20px]"><path d="M1 6h3l6-5v18l-6-5H1z" fill="#fff" /><circle cx="14" cy="14" r="4.500" fill="none" stroke="#e02020" stroke-width="2" /><path d="M11 11l6 6" stroke="#e02020" stroke-width="2" /></svg>
      <time class="w-[80px] text-center text-[14px] leading-[22px]">03:40<br />09/09/2023</time>
      <button aria-label="Show desktop" class="ml-[12px] w-[14px] h-full border border-[#8ea5d0] bg-[linear-gradient(180deg,#5672a8,#1c3872_50%,#3055a0)]"></button>
    </div>
  </footer>

  <script>
    let seed = 7;
    function rnd() {
      seed = (seed * 1664525 + 1013904223) % 4294967296;
      return seed / 4294967296;
    }

    const BOLD = 'font-weight="bold" font-size="12"';
    const TITLE = 'font-weight="bold" font-size="11"';
    function text(x, y, s, extra = 'font-size="11"', anchor = "middle") {
      return `<text x="${x}" y="${y}" text-anchor="${anchor}" ${extra}>${s}</text>`;
    }

    // line graphs on the left
    function graph(id, x0, yTicks, title, trace, cursor) {
      const x1 = 384, y0 = 10, y1 = 113;
      let s = `<rect x="${x0}" y="${y0}" width="${x1 - x0}" height="${y1 - y0}" fill="#000" />`;
      const step = (x1 - x0) / 12;
      for (let i = 0; i < 48; i++) {
        const x = Math.round(x0 + (x1 - x0) * i / 48) + 0.5;
        s += `<path d="M${x} ${y0}V${y1}" stroke="${i % 8 ? "#0a3010" : "#146414"}" />`;
      }
      for (let i = 1; i < 20; i++) {
        const y = Math.round(y0 + (y1 - y0) * i / 20) + 0.5;
        s += `<path d="M${x0} ${y}H${x1}" stroke="${i % 5 ? "#0a3010" : "#146414"}" />`;
      }
      s += `<path d="${trace(x0, x1, y0, y1)}" fill="none" stroke="#fff" />`;
      if (cursor) s += `<path d="M${cursor} ${y0}V${y1}" stroke="#ffff50" />`;
      s += `<path d="M${x0} ${y1}V${y0}H${x1}" fill="none" stroke="#777" /><path d="M${x0} ${y1 + .5}H${x1 + .5}V${y0}" fill="none" stroke="#eee" />`;
      yTicks.forEach(([v, y]) => {
        s += `<path d="M${x0 - 6} ${y + .5}h5" stroke="#000" />` + text(x0 - 9, y + 4, v, 'font-size="11"', "end");
      });
      for (let i = 0; i <= 6; i++) {
        const x = Math.round(x0 + step * 2 * i);
        s += `<path d="M${x + .5} ${y1 + 2}v5" stroke="#000" />` + text(x, 131, i * 2000);
      }
      s += text(226, 148, "Range (m)", TITLE);
      s += `<text transform="translate(34 62) rotate(-90)" text-anchor="middle" ${TITLE}>${title}</text>`;
      document.getElementById(id).innerHTML = s;
    }

    graph("ascope", 71, [["1.20", 10], ["1.15", 34], ["1.10", 58], ["1.05", 82], ["0.99", 111]], "A-scope", (x0, x1, y0, y1) => {
      let d = `M${x0 + 1} ${y1}V${y0 + 25}`;
      for (let x = x0 + 1; x < x1; x++) {
        const t = x - x0;
        let y = t < 8 ? 43 - t * 3.2 : t < 17 ? 18 + (t - 8) * 2.2 : 94 - 56 * Math.exp(-(t - 17) / 11);
        y += (rnd() - .5) * 5;
        d += `L${x} ${y0 + y}V${y0 + y + 2 + rnd() * 2}`;
      }
      return d;
    }, 264.5);

    graph("velocity", 75, [["5.00", 10], ["2.50", 35], ["0.00", 61], ["-2.50", 87], ["-5.00", 112]], "Velocity (m/s)", (x0, x1, y0, y1) => {
      let d = `M${x0 + 1} ${y1}V${y0 + 49}`;
      for (let x = x0 + 2; x < x1; x++) {
        const t = x - x0;
        if (t < 45) {
          const y = 49 - 8 * Math.exp(-((t - 22) ** 2) / 120) - (t > 34 ? 4 : 0);
          d += `L${x} ${y0 + y + (rnd() - .5) * (t > 16 ? 5 : 1)}v2`;
        } else if (t < 52) {
          d += `L${x} ${y0 + 45 + (t - 45) * 4}v${rnd() * 18}`;
        } else {
          const top = rnd() < .36 ? 0 : 12 + rnd() * 55;
          const bottom = rnd() < .38 ? 103 : 68 + rnd() * 30;
          d += `M${x + .5} ${y0 + top}V${y0 + bottom}`;
        }
      }
      return d;
    });

    // axes of the two colour maps
    document.querySelectorAll(".axis").forEach(el => {
      let s = "";
      for (let i = 0; i <= 10; i++) {
        const y = Math.round(9 + 26.6 * i);
        s += `<path d="M68 ${y + .5}h5" stroke="#000" />` + text(66, y + 5, 5000 - i * 500, BOLD, "end");
      }
      s += `<path d="M74.500 278v5M551.500 278v5" stroke="#000" />`;
      s += text(74, 294, "3453492", BOLD) + text(550, 294, "3453991", BOLD);
      s += `<text transform="translate(31 142) rotate(-90)" text-anchor="middle" ${BOLD}>Range (m)</text>`;
      el.innerHTML = s;
    });

    // colour scales
    document.querySelectorAll(".bar").forEach((el, n) => {
      const stops = [[0, "#900090"], [.2, "#ff0000"], [.26, "#ff9c00"], [.4, "#ffff30"], [.51, "#00ff00"], [.7, "#208080"], [.84, "#3030ff"], [.97, "#c0c0c0"]];
      let s = `<linearGradient id="ramp${n}" x2="0" y2="1">${stops.map(([o, c]) => `<stop offset="${o}" stop-color="${c}" />`).join("")}</linearGradient>`;
      s += `<rect x=".5" y=".5" width="19" height="149" fill="#000" stroke="${el.dataset.edge}" />`;
      if (n) s += `<path d="M1 1h18v3H1z" fill="#ff20ff" />`;
      s += `<rect x="1" y="6" width="18" height="138" fill="url(#ramp${n})" /><path d="M1 142h18v2H1z" fill="#fff" />`;
      if (!n) s += `<path d="M1 145h18v2H1zM1 4h18v1H1z" fill="#f060f0" />`;
      el.dataset.ticks.split(",").forEach((t, i) => {
        const y = 6 + i * 68;
        s += `<path d="M22 ${y + .5}h5" stroke="#000" />` + text(28, y + 5, t, BOLD, "start");
      });
      s += `<text transform="translate(61 73) rotate(90)" text-anchor="middle" ${TITLE}>${el.dataset.title}</text>`;
      el.innerHTML = s;
    });

    // smooth value noise
    const lattice = Array.from({ length: 4096 }, rnd);
    function noise(x, y) {
      const xi = Math.floor(x), yi = Math.floor(y);
      const f = t => t * t * (3 - 2 * t);
      const u = f(x - xi), v = f(y - yi);
      const at = (a, b) => lattice[((a & 63) + (b & 63) * 64)];
      return (at(xi, yi) * (1 - u) + at(xi + 1, yi) * u) * (1 - v) + (at(xi, yi + 1) * (1 - u) + at(xi + 1, yi + 1) * u) * v;
    }

    const ramp = [[0, [0, 255, 0]], [.35, [150, 255, 20]], [.55, [255, 255, 48]], [.8, [255, 200, 0]], [1, [255, 140, 0]]];
    function warm(v) {
      v = Math.max(0, Math.min(1, v));
      for (let i = 1; i < ramp.length; i++) {
        if (v <= ramp[i][0]) {
          const [a, ca] = ramp[i - 1], [b, cb] = ramp[i];
          return ca.map((c, k) => c + (cb[k] - c) * (v - a) / (b - a));
        }
      }
      return ramp[4][1];
    }

    function paint(id, pixel) {
      const c = document.getElementById(id), ctx = c.getContext("2d");
      const img = ctx.createImageData(c.width, c.height);
      for (let x = 0; x < c.width; x++) {
        const col = { r: rnd(), black: false, last: null };
        for (let y = 0; y < c.height; y++) {
          const p = pixel(x, y, col), i = (y * c.width + x) * 4;
          img.data[i] = p[0];
          img.data[i + 1] = p[1];
          img.data[i + 2] = p[2];
          img.data[i + 3] = 255;
        }
      }
      ctx.putImageData(img, 0, 0);
    }

    const rowNoise = Array.from({ length: 267 }, rnd);
    paint("backscatter", (x, y, col) => {
      if (y > 265) return rnd() < .8 ? [0, 0, 0] : [200, 200, 60];
      const p = y > 175 ? .0003 : y > 158 ? .015 : .05 + .09 * (1 - y / 163) + (y < 25 ? .09 * rowNoise[y] : 0);
      col.black = rnd() < (col.black ? .42 : p);
      if (col.black) return [0, 0, 0];
      if (y > 210) return warm((y - 210) / 85 + (rnd() - .5) * .05);
      if (y > 140) return rnd() < .12 * (1 - (y - 140) / 70) ? [20, 215, 60] : [0, 255, 0];
      const v = .5 * (1 - y / 140) * (.7 + rowNoise[y] * .3) + (rnd() - .4) * .4 * (1 - y / 160);
      return v < 0 ? [10, 240, 20] : warm(v);
    });

    paint("doppler", (x, y, col) => {
      if (y > 265) return rnd() < .85 ? [0, 0, 0] : [255, 255, 60];
      const edge = 158 + noise(x / 5, 3) * 14;
      if (rnd() < (edge + 10 - y) / 34) {
        // neighbouring gates of one ray often share a value
        if (col.last && rnd() < .3) return col.last;
        const r = rnd();
        const pink = .12 + col.r * .45 + (x / 478) * .18;
        if (r < .15) col.last = [0, 0, 0];
        else if (r < .15 + pink) col.last = rnd() < .75 ? [255, 0, 255] : [190, 0, 140];
        else if (r < .86) col.last = rnd() < .7 ? warm(rnd() * .9 - .1) : [220, 40, 50];
        else col.last = [[40, 130, 110], [0, 200, 40], [120, 110, 160], [220, 190, 140]][Math.floor(rnd() * 4)];
        return col.last;
      }
      const big = noise(x / 50 + 5, y / 34) * .5 + noise(x / 18, y / 12 + 7) * .3 + noise(x / 7, y / 6 + 30) * .2;
      const high = Math.max(0, Math.min(1, (215 - y) / 40));
      const low = Math.max(0, Math.min(1, (y - 238) / 12));
      let v = .3 + big * .5 + (rnd() - .5) * (.05 + .3 * high);
      v -= (col.r > .75 ? .16 : 0) * high;
      v = v * (1 - low) + (.12 + noise(x / 11, y / 9) * .4 + noise(x / 5, y / 4) * .28) * low;
      return warm(v);
    });
  </script>
</body>

</html>
